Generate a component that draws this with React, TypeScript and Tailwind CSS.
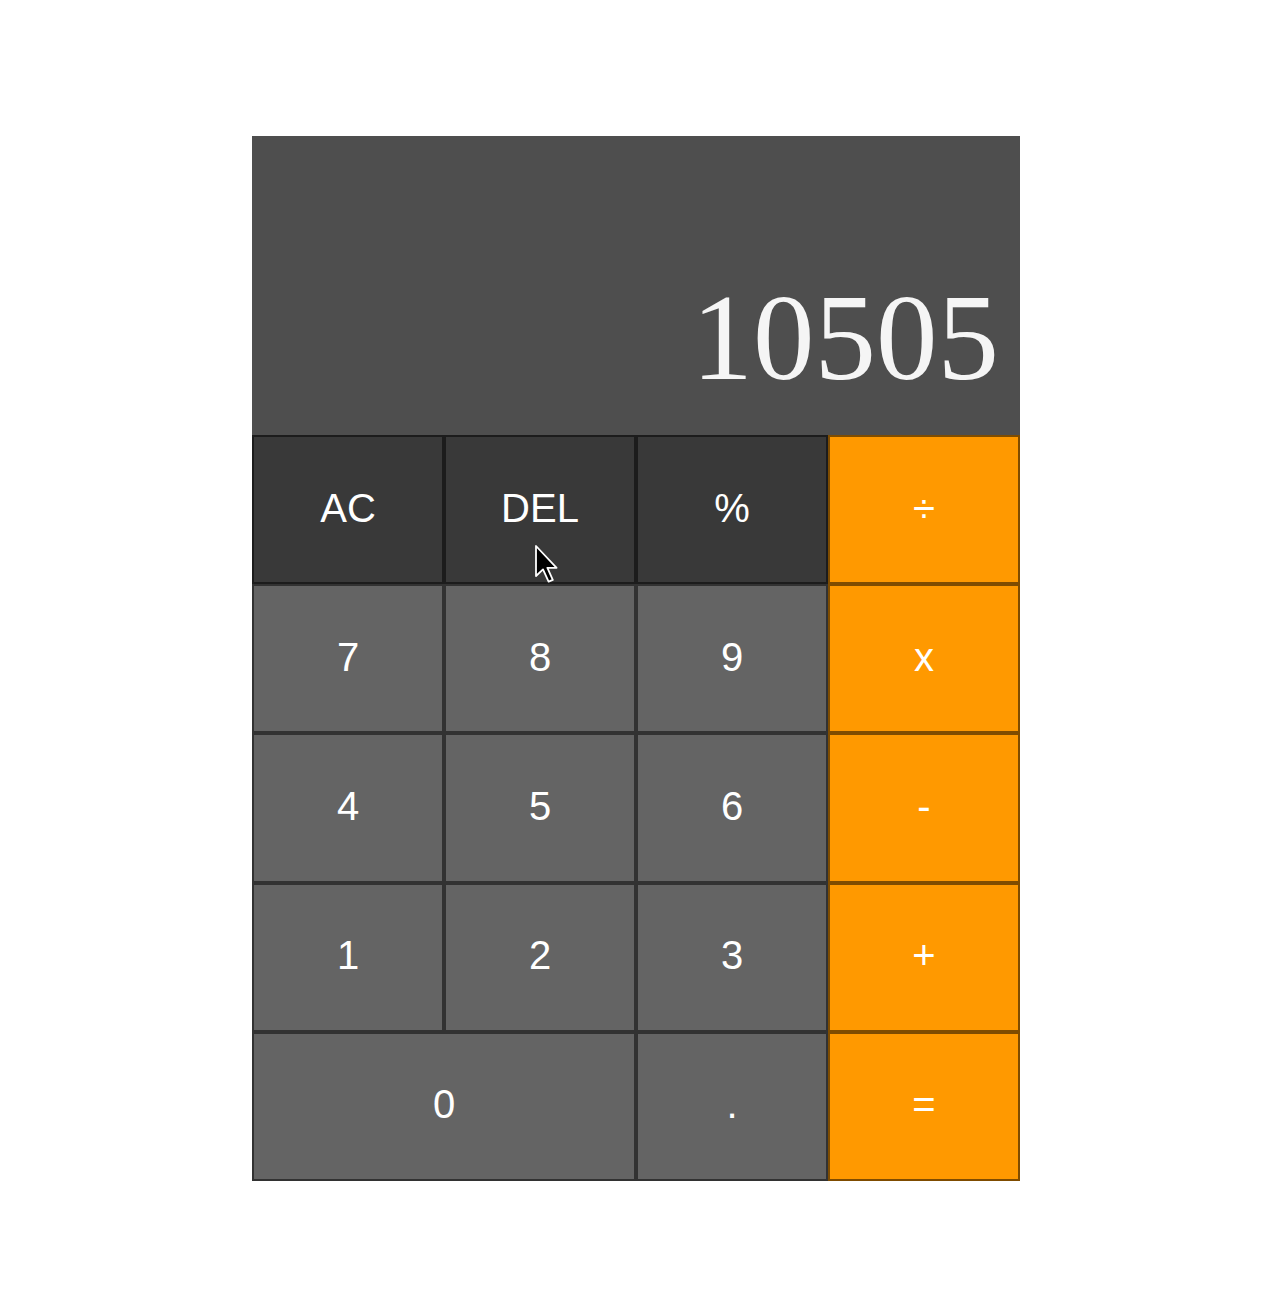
import React from "react";

const keys: { label: string; kind: "top" | "num" | "op"; wide?: boolean }[] = [
  { label: "AC", kind: "top" },
  { label: "DEL", kind: "top" },
  { label: "%", kind: "top" },
  { label: "÷", kind: "op" },
  { label: "7", kind: "num" },
  { label: "8", kind: "num" },
  { label: "9", kind: "num" },
  { label: "x", kind: "op" },
  { label: "4", kind: "num" },
  { label: "5", kind: "num" },
  { label: "6", kind: "num" },
  { label: "-", kind: "op" },
  { label: "1", kind: "num" },
  { label: "2", kind: "num" },
  { label: "3", kind: "num" },
  { label: "+", kind: "op" },
  { label: "0", kind: "num", wide: true },
  { label: ".", kind: "num" },
  { label: "=", kind: "op" },
];

const kindClass = {
  top: "bg-[#393939]",
  num: "bg-[#646464]",
  op: "bg-[#ff9900]",
};

function Cursor() {
  return (
    <svg
      className="pointer-events-none absolute left-[535px] top-[545px]"
      width="24"
      height="38"
      viewBox="0 0 12 19"
    >
      <path
        d="M0.5 0.5 L0.5 15.5 L4 12.2 L6.8 18.3 L8.9 17.4 L6.2 11.4 L10.8 11.4 Z"
        fill="#000"
        stroke="#fff"
        strokeWidth="0.9"
        strokeLinejoin="round"
      />
    </svg>
  );
}

export default function App() {
  return (
    <div className="relative min-h-[1314px] bg-white flex justify-center pt-[136px] pr-[10px]">
      <div className="w-[768px]">
        {/* Display */}
        <div className="h-[299px] bg-[#4e4e4e] flex items-end justify-end pr-[21px] pb-[36px]">
          <span className="text-[123px] leading-none text-[#f5f5f5] font-['Liberation_Serif',serif]">
            10505
          </span>
        </div>

        {/* Keys */}
        <div className="grid grid-cols-4 grid-rows-5 h-[746px] font-['Liberation_Sans',Arial,sans-serif]">
          {keys.map((k) => (
            <button
              key={k.label}
              className={`${kindClass[k.kind]} ${k.wide ? "col-span-2" : ""} border-2 border-black/50 flex items-center justify-center pb-1 text-[40px] text-white`}
            >
              {k.label}
            </button>
          ))}
        </div>
      </div>
      <Cursor />
    </div>
  );
}
